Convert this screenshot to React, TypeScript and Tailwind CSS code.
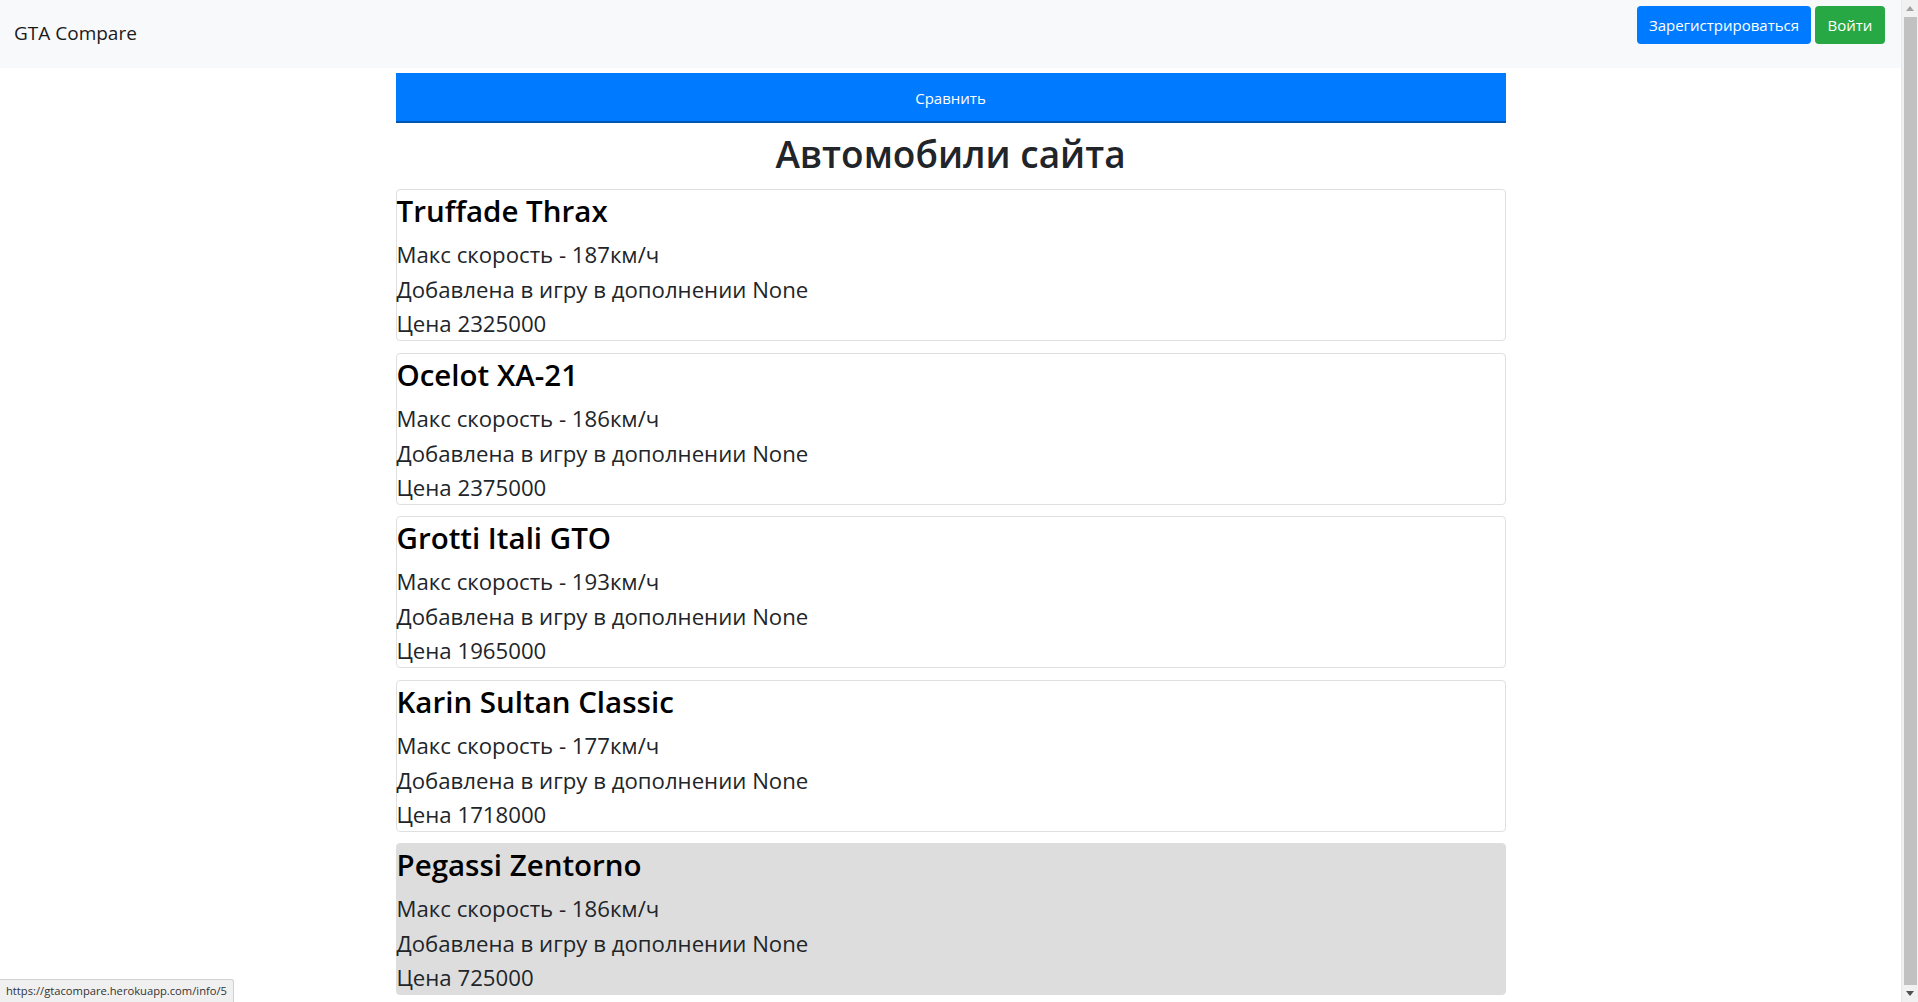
import React from "react";

const cars = [
  { name: "Truffade Thrax", speed: 187, price: 2325000 },
  { name: "Ocelot XA-21", speed: 186, price: 2375000 },
  { name: "Grotti Itali GTO", speed: 193, price: 1965000 },
  { name: "Karin Sultan Classic", speed: 177, price: 1718000 },
  { name: "Pegassi Zentorno", speed: 186, price: 725000, hover: true },
];

function Card({ name, speed, price, hover }: { name: string; speed: number; price: number; hover?: boolean }) {
  return (
    <div
      className={
        hover
          ? "mb-[11.5px] rounded-[4px] border border-[#dddddd] bg-[#dddddd] pt-[3px]"
          : "mb-[11.5px] rounded-[4px] border border-[#dfdfdf] bg-white pt-[3px]"
      }
    >
      <h3 className="mb-2 text-[29.5px] font-semibold leading-[36px] text-black">{name}</h3>
      <p className="text-[22.2px] leading-[35px] text-[#212529]">Макс скорость - {speed}км/ч</p>
      <p className="text-[22.2px] leading-[35px] text-[#212529]">Добавлена в игру в дополнении None</p>
      <p className="text-[22.2px] leading-[33px] text-[#212529]">Цена {price}</p>
    </div>
  );
}

export default function App() {
  return (
    <div
      className="relative flex h-[1002px] w-full overflow-hidden bg-white"
      style={{ fontFamily: '"Open Sans", "Noto Sans", sans-serif' }}
    >
      <div className="min-w-0 flex-1">
        <nav className="flex h-[68px] items-start justify-between bg-[#f8f9fa] pl-[14px] pr-[16px]">
          <a className="mt-[18px] text-[19px] leading-[30px] text-[#1a1a1a]">GTA Compare</a>
          <div className="mt-[6px] flex gap-[4px]">
            <button className="flex h-[38px] w-[174px] items-center justify-center rounded-[4px] bg-[#007bff] text-[15px] text-white">
              Зарегистрироваться
            </button>
            <button className="flex h-[38px] w-[70px] items-center justify-center rounded-[4px] bg-[#28a745] text-[15px] text-white">
              Войти
            </button>
          </div>
        </nav>
        <div className="mx-auto w-[1110px]">
          <button className="mt-[5px] flex h-[50px] w-full items-center justify-center border-b-2 border-[#0056b3] bg-[#007bff] pt-[2px] text-[15px] text-white">
            Сравнить
          </button>
          <h1 className="pb-[11px] pt-[7px] text-center text-[37px] font-semibold leading-[48px] text-[#212529]">
            Автомобили сайта
          </h1>
          {cars.map((c) => (
            <Card key={c.name} {...c} />
          ))}
        </div>
      </div>
      <div className="flex w-[17px] flex-col border-l border-[#e8e8e8] bg-[#f1f1f1]">
        <div className="flex h-[17px] items-center justify-center">
          <svg width="8" height="5" viewBox="0 0 8 5">
            <path d="M0 5 L4 0 L8 5 Z" fill="#a3a3a3" />
          </svg>
        </div>
        <div className="mx-auto w-[13px] flex-1 bg-[#c1c1c1]" />
        <div className="flex h-[17px] items-center justify-center">
          <svg width="8" height="5" viewBox="0 0 8 5">
            <path d="M0 0 L4 5 L8 0 Z" fill="#505050" />
          </svg>
        </div>
      </div>
      <div className="absolute bottom-0 left-0 rounded-tr-[3px] border-r border-t border-[#d0d0d0] bg-[#f0f0f0] px-[6px] text-[11.2px] leading-[22px] text-[#333]">
        https://gtacompare.herokuapp.com/info/5
      </div>
    </div>
  );
}
